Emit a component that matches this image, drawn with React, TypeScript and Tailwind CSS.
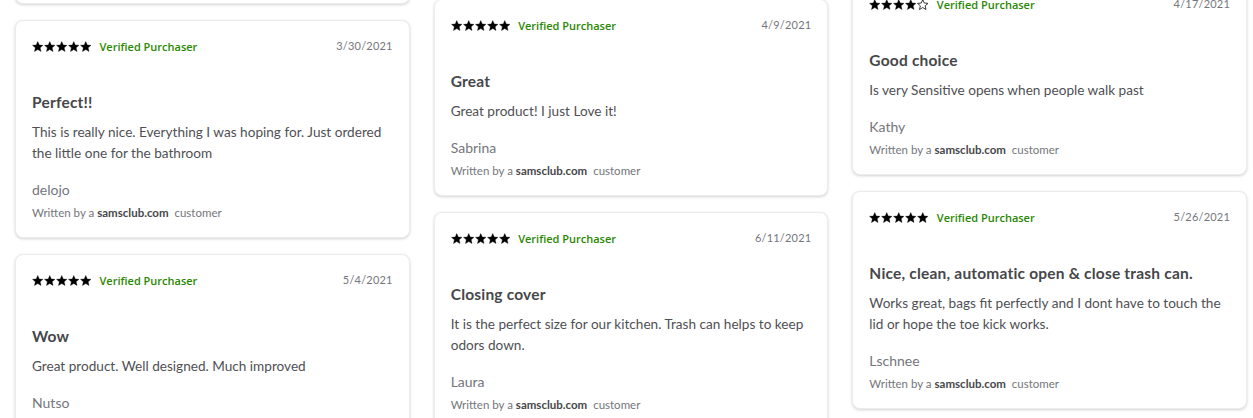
import React from "react";

type Review = {
  rating: number;
  date: string;
  title: string;
  body: string;
  name: string;
};

const STAR =
  "M6 0.6l1.55 3.6 3.9 0.35-2.95 2.57 0.88 3.82L6 8.93 2.62 10.94l0.88-3.82L0.55 4.55l3.9-0.35z";

function Stars({ rating }: { rating: number }) {
  return (
    <div className="flex items-center gap-[0.5px]">
      {[0, 1, 2, 3, 4].map((i) => (
        <svg key={i} width="11.5" height="11.5" viewBox="0 0 12 12">
          <path
            d={STAR}
            fill={i < rating ? "#000" : "none"}
            stroke="#000"
            strokeWidth={i < rating ? 0.4 : 0.8}
            strokeLinejoin="round"
          />
        </svg>
      ))}
    </div>
  );
}

function Card({ r }: { r: Review }) {
  return (
    <div className="rounded-lg border border-[#ececec] bg-white px-4 pb-4 pt-[18px] shadow-[0_1px_3px_rgba(0,0,0,0.18)]">
      <div className="flex h-4 items-start justify-between">
        <div className="flex h-4 items-center">
          <Stars rating={r.rating} />
          <span className="ml-2 font-['Open_Sans',sans-serif] text-[11px] font-semibold text-[#2a8703]">
            Verified Purchaser
          </span>
        </div>
        <span className="-mt-[1px] text-[11px] leading-4 tracking-[0.2px] text-[#74767c]">{r.date}</span>
      </div>
      <h3 className="mt-[35px] text-[15.5px] font-bold leading-6 tracking-[0.2px] text-[#46474a]">
        {r.title}
      </h3>
      <p className="mt-2 text-[13.6px] leading-[21px] text-[#4f5054]">{r.body}</p>
      <p className="mt-[15px] text-[14px] leading-[21px] text-[#74767c]">{r.name}</p>
      <p className="mt-[5px] text-[11.5px] leading-4 text-[#74767c]">
        Written by a <span className="font-bold text-[#46474a]">samsclub.com</span>&nbsp; customer
      </p>
    </div>
  );
}

const col1: Review[] = [
  {
    rating: 5,
    date: "3/30/2021",
    title: "Perfect!!",
    body: "This is really nice. Everything I was hoping for. Just ordered the little one for the bathroom",
    name: "delojo",
  },
  {
    rating: 5,
    date: "5/4/2021",
    title: "Wow",
    body: "Great product. Well designed. Much improved",
    name: "Nutso",
  },
];

const col2: Review[] = [
  {
    rating: 5,
    date: "4/9/2021",
    title: "Great",
    body: "Great product! I just Love it!",
    name: "Sabrina",
  },
  {
    rating: 5,
    date: "6/11/2021",
    title: "Closing cover",
    body: "It is the perfect size for our kitchen. Trash can helps to keep odors down.",
    name: "Laura",
  },
];

const col3: Review[] = [
  {
    rating: 4,
    date: "4/17/2021",
    title: "Good choice",
    body: "Is very Sensitive opens when people walk past",
    name: "Kathy",
  },
  {
    rating: 5,
    date: "5/26/2021",
    title: "Nice, clean, automatic open & close trash can.",
    body: "Works great, bags fit perfectly and I dont have to touch the lid or hope the toe kick works.",
    name: "Lschnee",
  },
];

export default function App() {
  return (
    <div className="h-[418px] w-[1253px] overflow-hidden bg-white font-['Lato',sans-serif]">
      <div className="flex items-start gap-6 pl-[15px] pr-[6px]">
        <div className="-mt-[116px] flex w-[395px] flex-col gap-4">
          <div className="h-[120px] rounded-lg border border-[#ececec] bg-white shadow-[0_1px_3px_rgba(0,0,0,0.18)]" />
          {col1.map((r) => (
            <Card key={r.title} r={r} />
          ))}
        </div>
        <div className="-mt-px flex w-[395px] flex-col gap-4">
          {col2.map((r) => (
            <Card key={r.title} r={r} />
          ))}
        </div>
        <div className="-mt-[22px] flex w-[395px] flex-col gap-4">
          {col3.map((r) => (
            <Card key={r.title} r={r} />
          ))}
        </div>
      </div>
    </div>
  );
}
